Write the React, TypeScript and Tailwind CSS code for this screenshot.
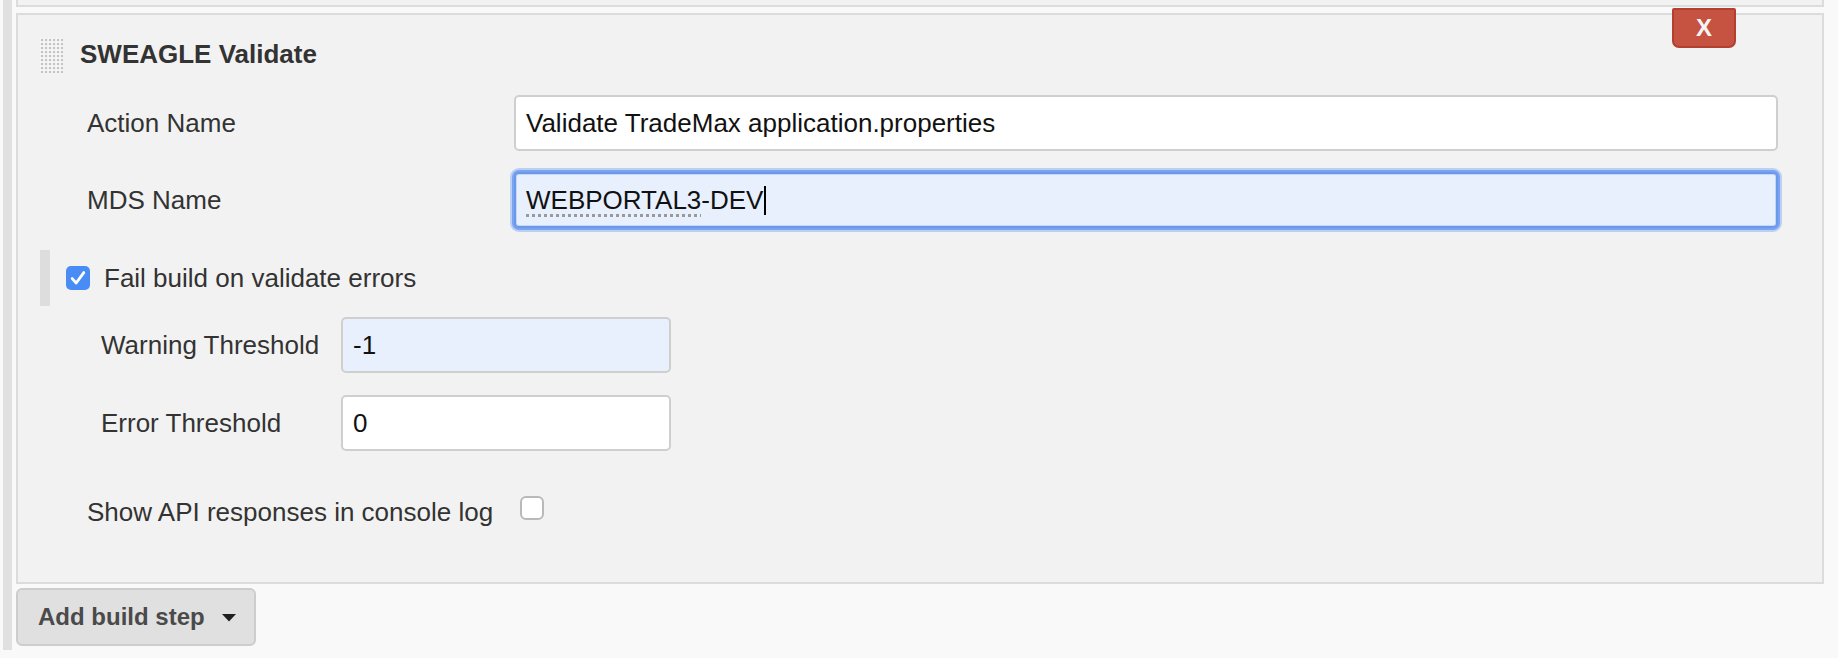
import React from "react";

function Grip() {
  const dots: React.ReactElement[] = [];
  for (let r = 0; r < 9; r++) {
    for (let c = 0; c < 6; c++) {
      dots.push(
        <rect key={`${r}-${c}`} x={1 + c * 4} y={1 + r * 4} width={2} height={2} fill="#c4c4c4" />
      );
      dots.push(
        <rect key={`h${r}-${c}`} x={c * 4} y={r * 4} width={1} height={1} fill="#ffffff" />
      );
    }
  }
  return (
    <svg width="24" height="35" viewBox="0 0 24 35" className="shrink-0">
      {dots}
    </svg>
  );
}

function TextBox({ value, width, blue }: { value: string; width?: string; blue?: boolean }) {
  return (
    <div
      className={`h-[56px] rounded-[5px] border-2 border-[#cfcfcf] px-[10px] text-[26px] leading-[52px] text-[#111] whitespace-nowrap overflow-hidden ${
        blue ? "bg-[#e8f0fe]" : "bg-white"
      } ${width ?? "flex-1"}`}
    >
      {value}
    </div>
  );
}

function CheckedBox() {
  return (
    <div className="w-[24px] h-[24px] rounded-[5px] bg-[#4a8cf6] flex items-center justify-center shrink-0">
      <svg width="24" height="24" viewBox="0 0 24 24">
        <path d="M6.2 12.6 L10.2 17 L17.8 6.6" stroke="#ffffff" strokeWidth="2.8" fill="none" strokeLinecap="round" strokeLinejoin="round" />
      </svg>
    </div>
  );
}

export default function App() {
  return (
    <div className="w-full h-[658px] bg-[#f9f9f9] overflow-hidden font-['Liberation_Sans',Arial,Helvetica,sans-serif] text-[#333]">
      <div className="flex pl-[3px]">
        <div className="w-[9px] bg-[#e0e0e0] shrink-0" />
        <div className="ml-[4px] w-[1808px] flex flex-col pb-[4px]">
          {/* previous chunk remnant */}
          <div className="h-[7px] border-x-2 border-b-2 border-[#dcdcdc] bg-[#f2f2f2]" />

          {/* main chunk */}
          <div className="relative mt-[6px] border-2 border-[#dcdcdc] bg-[#f2f2f2] pt-[23px] pb-[42px]">
            <div className="absolute top-[-7px] right-[86px] w-[64px] h-[40px] bg-[#c65241] border-2 border-[#b2402f] rounded-t-[2px] rounded-b-[7px] flex items-center justify-center text-[24px] font-bold text-[#f4f4f4] leading-none">
              X
            </div>

            {/* title */}
            <div className="flex items-start pl-[22px]">
              <Grip />
              <div className="ml-[16px] text-[26px] leading-[32px] font-bold text-[#333]">SWEAGLE Validate</div>
            </div>

            {/* Action Name */}
            <div className="flex mt-[22px] pl-[69px] pr-[44px]">
              <div className="w-[427px] shrink-0 text-[26px] leading-[56px]">Action Name</div>
              <TextBox value="Validate TradeMax application.properties" />
            </div>

            {/* MDS Name */}
            <div className="flex mt-[21px] pl-[69px] pr-[44px]">
              <div className="w-[427px] shrink-0 text-[26px] leading-[56px]">MDS Name</div>
              <div className="flex-1 h-[56px] rounded-[5px] border-2 border-[#6a99ec] bg-[#e8f0fe] px-[10px] text-[26px] leading-[52px] text-[#111] whitespace-nowrap shadow-[inset_0_0_0_1px_#c6d7f8,0_0_0_2px_#7aa4ee,0_0_0_4px_#bcd0f6] flex items-center">
                <span className="underline decoration-dotted decoration-[#9a9a9a] decoration-[3px] underline-offset-[5px]">WEBPORTAL3</span>
                <span>-DEV</span>
                <span className="inline-block w-[2px] h-[29px] bg-black ml-[1px]" />
              </div>
            </div>

            {/* Fail build checkbox */}
            <div className="flex items-center mt-[22px] pl-[22px] h-[56px]">
              <div className="w-[10px] h-[56px] bg-[#dddddd]" />
              <div className="ml-[16px]">
                <CheckedBox />
              </div>
              <div className="ml-[14px] text-[26px] leading-[56px]">Fail build on validate errors</div>
            </div>

            {/* Warning Threshold */}
            <div className="flex mt-[11px] pl-[83px]">
              <div className="w-[240px] shrink-0 text-[26px] leading-[56px]">Warning Threshold</div>
              <TextBox value="-1" width="w-[330px]" blue />
            </div>

            {/* Error Threshold */}
            <div className="flex mt-[22px] pl-[83px]">
              <div className="w-[240px] shrink-0 text-[26px] leading-[56px]">Error Threshold</div>
              <TextBox value="0" width="w-[330px]" />
            </div>

            {/* Show API */}
            <div className="flex items-start mt-[33px] pl-[69px]">
              <div className="w-[427px] shrink-0 text-[26px] leading-[56px] whitespace-nowrap">Show API responses in console log</div>
              <div className="ml-[6px] mt-[12px] w-[24px] h-[24px] rounded-[6px] border-2 border-[#b9b9b9] bg-white" />
            </div>
          </div>

          {/* Add build step */}
          <div className="mt-[4px] w-[240px] h-[58px] rounded-[6px] border-2 border-[#cdcdcd] bg-[#e0e0e0] flex items-center pl-[20px]">
            <span className="text-[24px] font-bold text-[#4a4a4a] leading-[54px]">Add build step</span>
            <svg width="14" height="8" viewBox="0 0 14 8" className="ml-[17px] mt-[2px]">
              <path d="M0 0 L14 0 L7 7.5 Z" fill="#1f1f1f" />
            </svg>
          </div>
        </div>
      </div>
    </div>
  );
}
